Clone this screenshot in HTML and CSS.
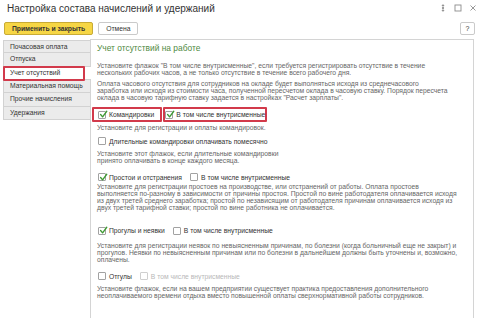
FILE: index.html
```html
<!DOCTYPE html>
<html lang="ru">
<head>
<meta charset="utf-8">
<title>Настройка состава начислений и удержаний</title>
<link rel="stylesheet" href="styles.css">
</head>
<body>
<div class="window">
  <div class="titlebar">
    <div class="title">Настройка состава начислений и удержаний</div>
    <div class="controls">
      <svg class="ctl" width="8" height="8" viewBox="0 0 8 8"><circle cx="4" cy="1.5" r="0.7"/><circle cx="4" cy="4" r="0.7"/><circle cx="4" cy="6.5" r="0.7"/></svg>
      <svg class="ctl" width="8" height="8" viewBox="0 0 8 8"><rect x="1" y="1" width="6" height="6" fill="none" stroke-width="0.9"/></svg>
      <svg class="ctl" width="8" height="8" viewBox="0 0 8 8"><path d="M1.5 1.5 L6.5 6.5 M6.5 1.5 L1.5 6.5" fill="none" stroke-width="0.9"/></svg>
    </div>
  </div>
  <div class="toolbar">
    <button class="btn primary">Применить и закрыть</button>
    <button class="btn">Отмена</button>
    <div class="spacer"></div>
    <button class="btn help">?</button>
  </div>
  <div class="main">
    <div class="tabs">
      <div class="tab">Почасовая оплата</div>
      <div class="tab">Отпуска</div>
      <div class="tab active">Учет отсутствий</div>
      <div class="tab">Материальная помощь</div>
      <div class="tab">Прочие начисления</div>
      <div class="tab">Удержания</div>
    </div>
    <div class="panel">
      <div class="section-title">Учет отсутствий на работе</div>
      <p class="note m-p1">Установите флажок "В том числе внутрисменные", если требуется регистрировать отсутствие в течение<br>нескольких рабочих часов, а не только отсутствие в течение всего рабочего дня.</p>
      <p class="note m-p2">Оплата часового отсутствия для сотрудников на окладе будет выполняться исходя из среднечасового<br>заработка или исходя из стоимости часа, полученной пересчетом оклада в часовую ставку. Порядок пересчета<br>оклада в часовую тарифную ставку задается в настройках "Расчет зарплаты".</p>

      <div class="row hl-row m-r1">
        <label class="cb hl hl-first"><span class="box"><svg class="tick" viewBox="0 0 10 10"><path d="M1.8 5 L4 7.6 L8.6 1.4"/></svg></span><span class="lbl">Командировки</span></label>
        <label class="cb hl hl-second"><span class="box"><svg class="tick" viewBox="0 0 10 10"><path d="M1.8 5 L4 7.6 L8.6 1.4"/></svg></span><span class="lbl">В том числе внутрисменные</span></label>
      </div>
      <p class="note m-n1">Установите для регистрации и оплаты командировок.</p>

      <div class="row m-r2">
        <label class="cb"><span class="box"></span><span class="lbl">Длительные командировки оплачивать помесячно</span></label>
      </div>
      <p class="note m-n2">Установите этот флажок, если длительные командировки<br>принято оплачивать в конце каждого месяца.</p>

      <div class="row m-r3">
        <label class="cb"><span class="box"><svg class="tick" viewBox="0 0 10 10"><path d="M1.8 5 L4 7.6 L8.6 1.4"/></svg></span><span class="lbl">Простои и отстранения</span></label>
        <label class="cb"><span class="box"></span><span class="lbl">В том числе внутрисменные</span></label>
      </div>
      <p class="note m-n3">Установите для регистрации простоев на производстве, или отстранений от работы. Оплата простоев<br>выполняется по-разному в зависимости от причины простоя. Простой по вине работодателя оплачивается исходя<br>из двух третей среднего заработка; простой по независящим от работодателя причинам оплачивается исходя из<br>двух третей тарифной ставки; простой по вине работника не оплачивается.</p>

      <div class="row m-r4">
        <label class="cb"><span class="box"><svg class="tick" viewBox="0 0 10 10"><path d="M1.8 5 L4 7.6 L8.6 1.4"/></svg></span><span class="lbl">Прогулы и неявки</span></label>
        <label class="cb"><span class="box"></span><span class="lbl">В том числе внутрисменные</span></label>
      </div>
      <p class="note m-n4">Установите для регистрации неявок по невыясненным причинам, по болезни (когда больничный еще не закрыт) и<br>прогулов. Неявки по невыясненным причинам или по болезни в дальнейшем должны быть уточнены и, возможно,<br>оплачены.</p>

      <div class="row m-r5">
        <label class="cb"><span class="box"></span><span class="lbl">Отгулы</span></label>
        <label class="cb disabled"><span class="box"></span><span class="lbl">В том числе внутрисменные</span></label>
      </div>
      <p class="note m-n5">Установите флажок, если на вашем предприятии существует практика предоставления дополнительного<br>неоплачиваемого времени отдыха вместо повышенной оплаты сверхнормативной работы сотрудников.</p>
    </div>
  </div>
</div>
</body>
</html>
```

FILE: styles.css
```css
* { box-sizing: border-box; }
html, body { margin: 0; padding: 0; background: #fff; }
body {
  font-family: "Liberation Sans", Arial, sans-serif;
  color: #333;
  width: 480px;
  height: 318px;
  overflow: hidden;
}
.window { display: flex; flex-direction: column; height: 318px; }

.titlebar { display: flex; align-items: center; height: 16px; padding: 0 3px 0 7px; }
.title { flex: 1; font-size: 10px; color: #333; white-space: nowrap; }
.controls { display: flex; align-items: center; gap: 7px; }
.ctl { fill: #8c8c8c; stroke: #8c8c8c; }

.toolbar { display: flex; align-items: center; gap: 5px; height: 13px; margin-top: 6px; padding: 0 5px 0 4px; }
.btn {
  font-family: inherit;
  font-size: 6.75px;
  height: 13px;
  padding: 0 7px;
  border: 1px solid #cacaca;
  border-radius: 2px;
  background: #fff;
  color: #333;
  line-height: 11px;
  white-space: nowrap;
}
.btn.primary { background: #f6d645; border-color: #c8ab36; font-weight: bold; color: #333; }
.btn.help { width: 15px; padding: 0; font-size: 7px; }
.spacer { flex: 1; }

.main { flex: 1; display: flex; margin-top: 4px; padding: 0 6px 0 3px; min-height: 0; }

.tabs { width: 87px; display: flex; flex-direction: column; padding-top: 1px; flex-shrink: 0; }
.tab {
  height: 13.33px;
  border: 1px solid #d2d2d2;
  border-top: none;
  border-right: none;
  background: #ebebeb;
  font-size: 6.75px;
  line-height: 12px;
  padding-left: 6px;
  color: #333;
  white-space: nowrap;
}
.tab:first-child { border-top: 1px solid #d2d2d2; }
.tab.active {
  background: #fff;
  position: relative;
  margin-right: -1px;
  z-index: 1;
}
.tab.active::after {
  content: "";
  position: absolute;
  left: -1px; top: -1px; right: 6px; bottom: -2px;
  border: 2px solid #d23a4b;
  border-radius: 1px;
}

.panel {
  flex: 1;
  border: 1px solid #d4d4d4;
  border-bottom: none;
  padding: 3px 6px 0 6px;
  min-width: 0;
}
.section-title { font-size: 8.4px; line-height: 10px; color: #4f8a3f; white-space: nowrap; }

.note {
  margin: 0;
  font-size: 6.75px;
  line-height: 7px;
  color: #666;
  white-space: nowrap;
}

.row { display: flex; align-items: center; gap: 8px; height: 10px; padding-left: 1px; }
.cb { display: flex; align-items: center; font-size: 6.75px; color: #333; white-space: nowrap; }
.box {
  width: 8px; height: 8px;
  border: 1px solid #a2a2a2;
  border-radius: 1px;
  background: #fff;
  position: relative;
  flex-shrink: 0;
}
.tick {
  position: absolute;
  left: -0.5px; top: -1.5px;
  width: 9px; height: 9px;
  fill: none;
  stroke: #3f9a34;
  stroke-width: 1.5;
  stroke-linecap: round;
  stroke-linejoin: round;
}
.lbl { margin-left: 3px; }
.cb.disabled { color: #b8b8b8; }
.cb.disabled .box { border-color: #cfcfcf; }

.hl-row { height: 15px; gap: 1px; }
.hl { height: 15px; border: 2px solid #d23a4b; border-radius: 1px; }
.hl-first { margin-left: -6px; padding: 0 6px 0 4px; }
.hl-second { padding: 0; }

.m-p1 { margin-top: 8.5px; }
.m-p2 { margin-top: 4px; }
.m-r1 { margin-top: 6.5px; }
.m-n1 { margin-top: 1.5px; }
.m-r2 { margin-top: 5.5px; }
.m-n2 { margin-top: 3.5px; }
.m-r3 { margin-top: 8.5px; }
.m-n3 { margin-top: 1px; }
.m-r4 { margin-top: 14.5px; }
.m-n4 { margin-top: 6px; }
.m-r5 { margin-top: 8.5px; }
.m-n5 { margin-top: 3.5px; }
```
